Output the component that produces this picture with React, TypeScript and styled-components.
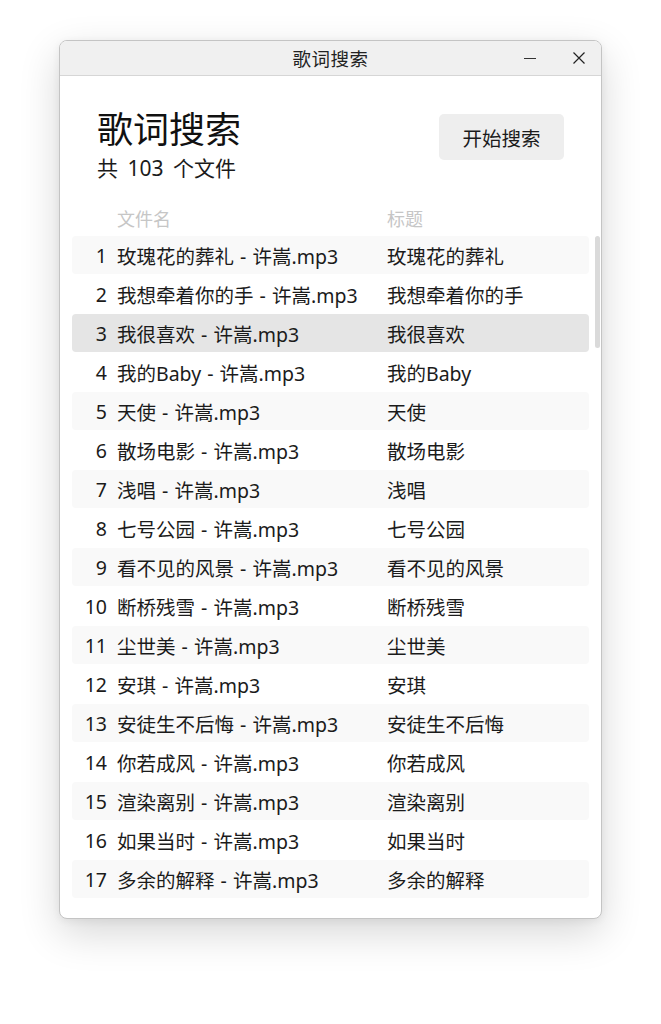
import React from "react"
import styled, { createGlobalStyle } from "styled-components"

const GlobalStyle = createGlobalStyle`
    html, body {
        margin: 0;
        padding: 0;
        background: #ffffff;
    }
    body {
        font-family: "Noto Sans", "Noto Sans CJK SC", sans-serif;
        color: #1b1b1b;
    }
`

const Page = styled.div`
    width: 661px;
    height: 1024px;
    padding: 40px 59px 0 59px;
    box-sizing: border-box;
`

const Window = styled.div`
    width: 543px;
    height: 879px;
    box-sizing: border-box;
    border: 1px solid #c4c4c4;
    border-radius: 8px;
    background: #ffffff;
    box-shadow: 0 14px 40px rgba(0, 0, 0, 0.16), 0 2px 8px rgba(0, 0, 0, 0.06);
    overflow: hidden;
    display: flex;
    flex-direction: column;
`

const TitleBar = styled.div`
    position: relative;
    height: 35px;
    flex-shrink: 0;
    background: #f0f0f0;
    border-bottom: 1px solid #d6d6d6;
    display: flex;
    align-items: center;
    justify-content: center;
    box-sizing: border-box;
`

const TitleText = styled.div`
    font-family: "Noto Sans CJK SC", sans-serif;
    font-size: 18.5px;
    color: #222;
    letter-spacing: 0.5px;
`

const WinButtons = styled.div`
    position: absolute;
    right: 0;
    top: 0;
    height: 100%;
    display: flex;
    align-items: center;
    gap: 5px;
`

const WinButton = styled.div`
    width: 44px;
    height: 100%;
    display: flex;
    align-items: center;
    justify-content: center;
`

const Content = styled.div`
    position: relative;
    flex: 1;
    padding: 0 12px;
    display: flex;
    flex-direction: column;
`

const Header = styled.div`
    display: flex;
    justify-content: space-between;
    align-items: flex-start;
    padding: 29px 25px 0 25px;
`

const HeaderLeft = styled.div`
    display: flex;
    flex-direction: column;
    gap: 5px;
`

const Heading = styled.h1`
    margin: 0;
    font-family: "Noto Sans CJK SC", sans-serif;
    font-weight: 400;
    font-size: 36px;
    line-height: 44px;
    color: #111;
`

const SubTitle = styled.div`
    font-size: 21px;
    line-height: 28px;
    word-spacing: 4px;
    color: #1b1b1b;
`

const SearchButton = styled.button`
    margin-top: 9px;
    width: 125px;
    height: 46px;
    border: none;
    border-radius: 5px;
    background: #eeeeee;
    font-family: "Noto Sans CJK SC", sans-serif;
    font-size: 19.5px;
    color: #1b1b1b;
    cursor: pointer;
`

const ColumnHeader = styled.div`
    display: flex;
    margin-top: 22px;
    height: 28px;
    align-items: center;
    font-family: "Noto Sans CJK SC", sans-serif;
    font-size: 18px;
    color: #c6c6c6;
    margin-bottom: 4px;
`

const List = styled.div`
    display: flex;
    flex-direction: column;
    gap: 1px;
`

const Row = styled.div<{ $shade: "none" | "light" | "selected" }>`
    display: flex;
    align-items: center;
    height: 38px;
    border-radius: 4px;
    font-size: 19.5px;
    color: #1b1b1b;
    background: ${({ $shade }) =>
        $shade === "selected" ? "#e5e5e5" : $shade === "light" ? "#f9f9f9" : "transparent"};
`

const NumCell = styled.div`
    width: 35px;
    text-align: right;
    flex-shrink: 0;
`

const NameCell = styled.div`
    width: 270px;
    padding-left: 10px;
    flex-shrink: 0;
    white-space: nowrap;
    word-spacing: 1px;
`

const TitleCell = styled.div`
    white-space: nowrap;
`

const HeaderName = styled(NameCell)`
    margin-left: 35px;
`

const ScrollThumb = styled.div`
    position: absolute;
    right: 1px;
    top: 160px;
    width: 5px;
    height: 112px;
    border-radius: 3px;
    background: #dadada;
`

const songs = [
    "玫瑰花的葬礼",
    "我想牵着你的手",
    "我很喜欢",
    "我的Baby",
    "天使",
    "散场电影",
    "浅唱",
    "七号公园",
    "看不见的风景",
    "断桥残雪",
    "尘世美",
    "安琪",
    "安徒生不后悔",
    "你若成风",
    "渲染离别",
    "如果当时",
    "多余的解释",
]

const App: React.FC = () => {
    const selected = 3
    return (
        <Page>
            <GlobalStyle />
            <Window>
                <TitleBar>
                    <TitleText>歌词搜索</TitleText>
                    <WinButtons>
                        <WinButton>
                            <svg width="14" height="14" viewBox="0 0 14 14">
                                <path d="M1 7.5h12" stroke="#333" strokeWidth="1.1" />
                            </svg>
                        </WinButton>
                        <WinButton>
                            <svg width="14" height="14" viewBox="0 0 14 14">
                                <path d="M1.5 1.5l11 11M12.5 1.5l-11 11" stroke="#222" strokeWidth="1.2" />
                            </svg>
                        </WinButton>
                    </WinButtons>
                </TitleBar>
                <Content>
                    <Header>
                        <HeaderLeft>
                            <Heading>歌词搜索</Heading>
                            <SubTitle>共 103 个文件</SubTitle>
                        </HeaderLeft>
                        <SearchButton>开始搜索</SearchButton>
                    </Header>
                    <ColumnHeader>
                        <HeaderName>文件名</HeaderName>
                        <TitleCell>标题</TitleCell>
                    </ColumnHeader>
                    <List>
                        {songs.map((s, i) => {
                            const n = i + 1
                            const shade = n === selected ? "selected" : n % 2 === 1 ? "light" : "none"
                            return (
                                <Row key={n} $shade={shade}>
                                    <NumCell>{n}</NumCell>
                                    <NameCell>{s} - 许嵩.mp3</NameCell>
                                    <TitleCell>{s}</TitleCell>
                                </Row>
                            )
                        })}
                    </List>
                    <ScrollThumb />
                </Content>
            </Window>
        </Page>
    )
}

export default App
